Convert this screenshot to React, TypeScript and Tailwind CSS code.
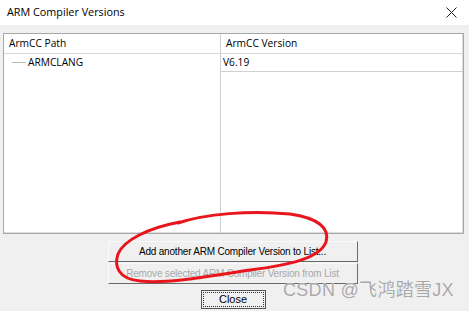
import React from "react";

export default function App() {
  const ui = { fontFamily: '"Open Sans","Noto Sans",sans-serif' };
  const tahoma = { fontFamily: '"Liberation Sans","DejaVu Sans",sans-serif' };
  return (
    <div className="relative w-[469px] h-[311px] overflow-hidden bg-[#f0f0f0]" style={ui}>
      {/* Title bar */}
      <div className="h-[25px] bg-white flex items-center justify-between pl-[7px] pr-[9px]">
        <span className="text-[10.8px] text-black leading-none">ARM Compiler Versions</span>
        <svg width="11" height="11" viewBox="0 0 11 11" className="mr-[3px]">
          <path d="M0.5 0.5 L10.5 10.5 M10.5 0.5 L0.5 10.5" stroke="#222" strokeWidth="1" />
        </svg>
      </div>

      {/* Table */}
      <div className="mx-[3px] mt-[8px] w-[461px] h-[201px] border border-[#a8a8a8] bg-white shadow-[inset_-1px_-1px_0_#dcdcdc]">
        <div className="grid grid-cols-[217px_1fr] h-full">
          <div className="border-r border-[#d0d0d0] flex flex-col">
            <div className="h-[20px] border-b border-[#d8d8d8] flex items-center pl-[5px] text-[10.2px] text-black">
              ArmCC Path
            </div>
            <div className="h-[17px] flex items-center pl-[8px] text-[10.2px] text-black">
              <span className="inline-block w-[14px] h-px bg-[#b8b8b8] mr-[2px]" />
              ARMCLANG
            </div>
          </div>
          <div className="flex flex-col">
            <div className="h-[20px] border-b border-[#d8d8d8] flex items-center pl-[5px] text-[10.2px] text-black">
              ArmCC Version
            </div>
            <div className="h-[18px] border-b border-[#d0d0d0] flex items-center pl-[2px] text-[10.2px] text-black">
              V6.19
            </div>
          </div>
        </div>
      </div>

      {/* Buttons */}
      <div className="flex flex-col items-center mt-[7px]" style={tahoma}>
        <div className="ml-[-4px] w-[250px] h-[21px] border-r border-b border-[#6a6a6a] border-t border-l border-t-[#fafafa] border-l-[#fafafa] flex items-center justify-center text-[10px] tracking-[-0.2px] text-black">
          Add another ARM Compiler Version to List...
        </div>
        <div className="ml-[-4px] mt-[1px] w-[250px] h-[21px] border-r border-b border-[#6a6a6a] border-t border-l border-t-[#fafafa] border-l-[#fafafa] flex items-center justify-center text-[10px] tracking-[-0.2px] text-[#a8a8a8]">
          Remove selected ARM Compiler Version from List
        </div>
        <div className="ml-[-3px] mt-[6px] w-[65px] h-[19px] border border-[#555] p-[1px]">
          <div className="w-full h-full border border-dotted border-[#333] flex items-center justify-center text-[11px] text-black">
            Close
          </div>
        </div>
      </div>

      {/* Watermark */}
      <div
        className="absolute left-[283px] top-[281px] text-[18px] text-[#a9a9a9] leading-none tracking-[0.3px]"
        style={{ fontFamily: '"Liberation Sans","Noto Sans CJK SC",sans-serif', textShadow: "0 0 1px #fff" }}
      >
        CSDN @飞鸿踏雪JX
      </div>

      {/* Red hand-drawn ellipse */}
      <svg className="absolute left-0 top-0 pointer-events-none" width="469" height="311" viewBox="0 0 469 311">
        <path
          d="M178 223 C205 214, 250 210, 290 214 C318 218, 330 228, 326 242 C320 258, 290 265, 250 270 C210 276, 170 284, 140 281 C118 279, 114 266, 118 254 C124 240, 148 228, 180 222"
          fill="none"
          stroke="#e8161c"
          strokeWidth="3"
          strokeLinecap="round"
        />
      </svg>
    </div>
  );
}
